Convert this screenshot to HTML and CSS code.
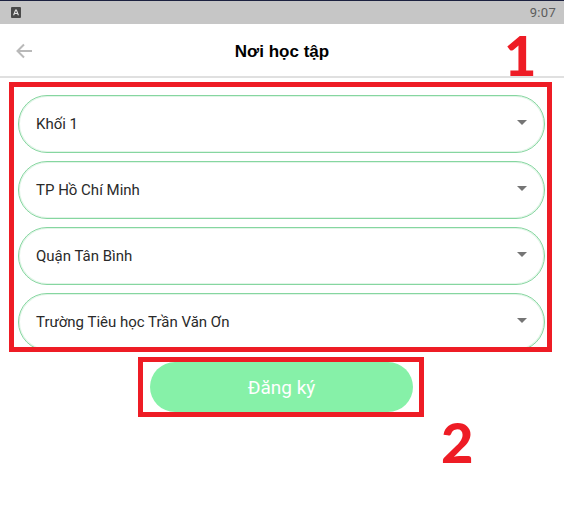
FILE: index.html
```html
<!DOCTYPE html>
<html lang="vi">
<head>
    <meta charset="UTF-8">
    <meta name="viewport" content="width=device-width, initial-scale=1.0">
    <title>Nơi học tập</title>
    <link rel="stylesheet" href="styles.css">
</head>
<body>
    <div class="status-bar">
        <svg class="status-icon" width="10" height="11" viewBox="0 0 10 11">
            <rect width="10" height="11" rx="1" fill="#4a4a4a"/>
            <path d="M2 8.2 4.2 2.4h1.6L8 8.2H6.7L6.3 7H3.7l-.4 1.2zM4.1 5.9h1.8L5 3.6z" fill="#e4e4e4"/>
        </svg>
        <span class="status-time">9:07</span>
    </div>

    <div class="app-bar">
        <svg class="back-icon" width="18" height="16" viewBox="0 0 18 16">
            <path d="M17 8H2.5M9 1.5 2.5 8 9 14.5" fill="none" stroke="#b9b9b9" stroke-width="2"/>
        </svg>
        <h1>Nơi học tập</h1>
    </div>

    <div class="form-box">
        <div class="select"><span>Khối 1</span><i class="caret"></i></div>
        <div class="select"><span>TP Hồ Chí Minh</span><i class="caret"></i></div>
        <div class="select"><span>Quận Tân Bình</span><i class="caret"></i></div>
        <div class="select"><span>Trường Tiêu học Trần Văn Ơn</span><i class="caret"></i></div>
    </div>

    <div class="button-box">
        <button>Đăng ký</button>
    </div>

    <div class="mark mark-1">1</div>
    <div class="mark mark-2">2</div>
</body>
</html>
```

FILE: styles.css
```css
* { margin: 0; padding: 0; box-sizing: border-box; }
body { font-family: Roboto, "Liberation Sans", sans-serif; background: white; color: #2a2a2a; height: 509px; overflow: hidden; position: relative; }

.status-bar { height: 24px; background: #c6c6c6; border-top: 1px solid #1c2140; display: flex; align-items: center; justify-content: space-between; padding: 0 8px 0 11px; }
.status-time { font-size: 13px; color: #5c5c5c; letter-spacing: 0.3px; }

.app-bar { height: 54px; padding-top: 3px; border-bottom: 2px solid #e0e0e0; display: flex; align-items: center; justify-content: center; position: relative; }
.app-bar h1 { font-family: "Liberation Sans", Arial, sans-serif; font-size: 17px; font-weight: bold; color: black; letter-spacing: 0.02px; }
.back-icon { position: absolute; left: 15px; top: 19px; }

.form-box { width: 543px; height: 270px; margin: 4px 0 0 9px; border: 5px solid #ee1c25; padding: 8px 2px 0 4px; display: flex; flex-direction: column; gap: 8px; overflow: hidden; }
.select { flex: none; height: 58px; border: 1px solid #86d6a0; box-shadow: inset 0 0 0 1px rgba(134, 214, 160, 0.25); border-radius: 29px; display: flex; align-items: center; justify-content: space-between; padding: 0 17px 3px 17px; font-size: 15px; }
.select span { margin-top: 3px; }
.caret { width: 0; height: 0; border-left: 5px solid transparent; border-right: 5px solid transparent; border-top: 5px solid #757575; }

.button-box { width: 286px; height: 60px; margin: 5px 0 0 138px; border: 5px solid #ee1c25; padding: 0 6px 0 7px; }
button { width: 100%; height: 50px; border: none; border-radius: 25px; background: #86f1a8; color: white; font-family: Roboto, sans-serif; font-size: 19px; }

.mark { position: absolute; font-family: Lato, sans-serif; font-weight: 900; font-size: 56px; line-height: 56px; color: #ee1c25; }
.mark-1 { left: 504px; top: 27px; }
.mark-2 { left: 441px; top: 414px; }
```
